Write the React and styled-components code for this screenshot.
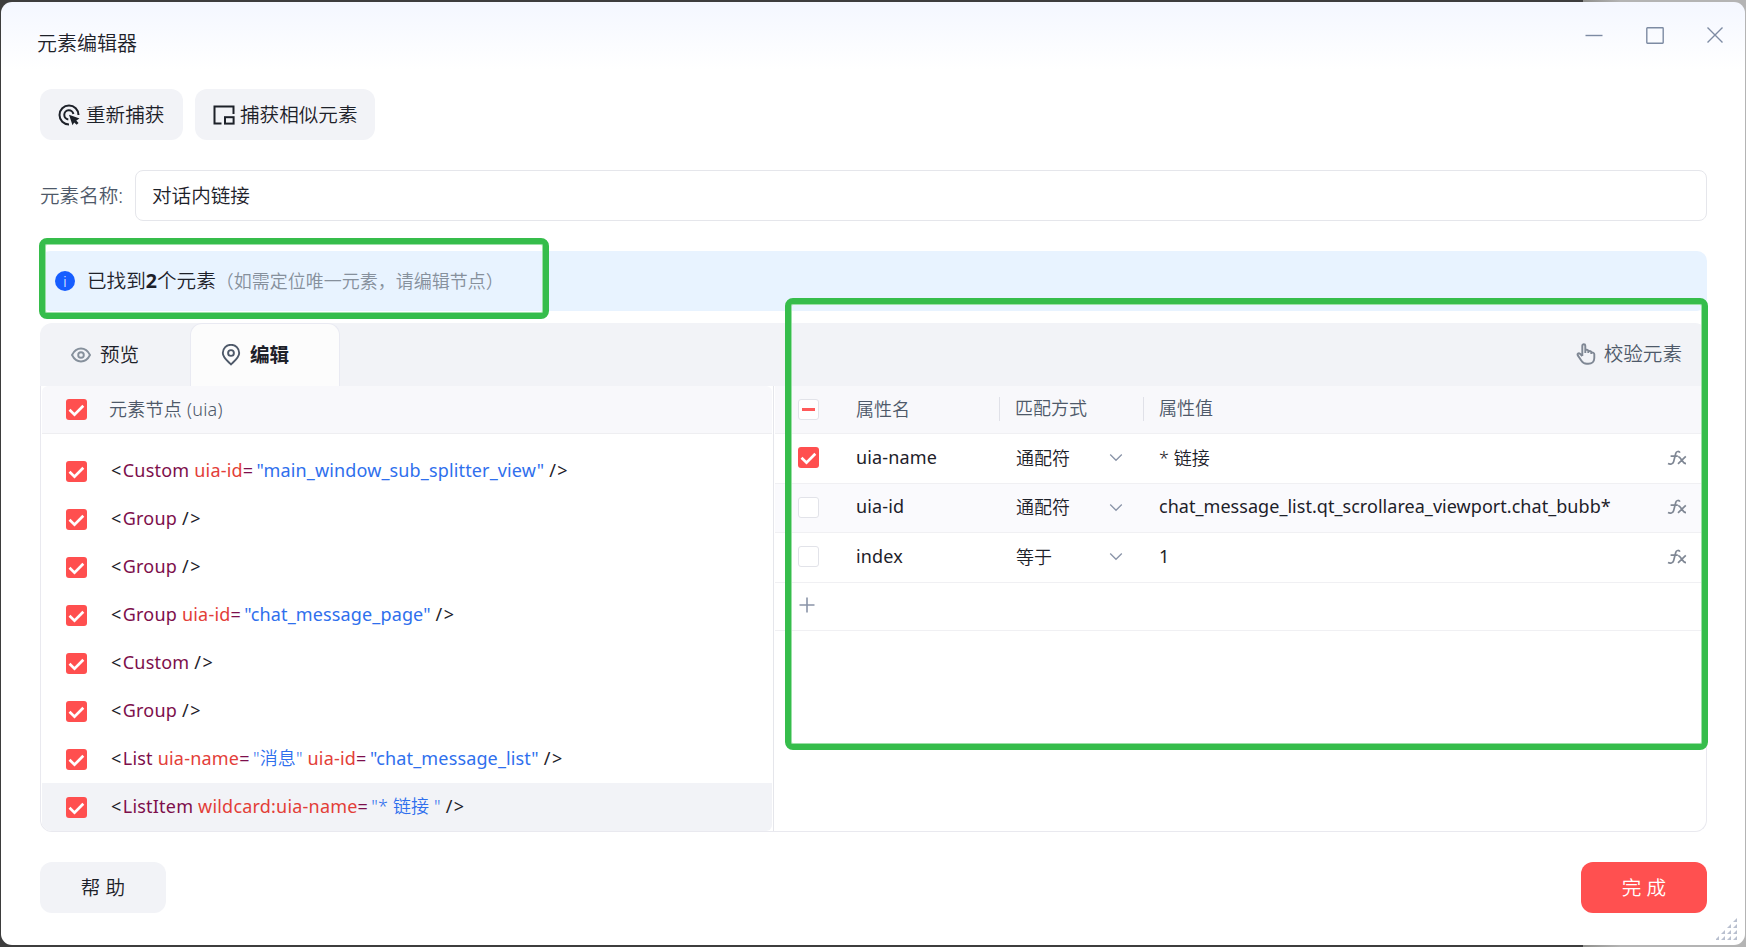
import React from 'react';
import styled, { createGlobalStyle } from 'styled-components';

const GlobalStyle = createGlobalStyle`
  * {
    box-sizing: border-box;
  }

  body {
    margin: 0;
    background: #3d3d3d;
    font-family: 'Noto Sans', 'Noto Sans CJK SC', sans-serif;
    overflow: hidden;
  }
`;

const nodes = [
  { tag: 'Custom', attrs: [['uia-id', 'main_window_sub_splitter_view']] },
  { tag: 'Group', attrs: [] },
  { tag: 'Group', attrs: [] },
  { tag: 'Group', attrs: [['uia-id', 'chat_message_page']] },
  { tag: 'Custom', attrs: [] },
  { tag: 'Group', attrs: [] },
  { tag: 'List', attrs: [['uia-name', '消息'], ['uia-id', 'chat_message_list']] },
  { tag: 'ListItem', attrs: [['wildcard:uia-name', '* 链接 ']], active: true },
];

const props = [
  { name: 'uia-name', match: '通配符', value: '* 链接', checked: true },
  { name: 'uia-id', match: '通配符', value: 'chat_message_list.qt_scrollarea_viewport.chat_bubb*' },
  { name: 'index', match: '等于', value: '1' },
];

// Chinese glyphs look too heavy beside the latin ones at regular weight
const hasChinese = (text) => /[\u4e00-\u9fff]/.test(text);

const Checkbox = ({ checked, partial }) => (
  <Box $checked={checked}>
    {checked && (
      <svg width='21' height='21' viewBox='0 0 21 21' fill='none'>
        <path d='M3.500 10.800l5 4.900L17.300 6.800' stroke='#fff' strokeWidth='2.7' />
      </svg>
    )}
    {partial && <Dash />}
  </Box>
);

const FxIcon = () => (
  <svg width='20' height='16' viewBox='0 0 20 16' fill='none' stroke='#7f8794' strokeWidth='1.7'>
    <path d='M13 2.600C12 1 9.400 1 8.800 3.200L6.600 11.800C6 14.200 3.200 14.600 1 13.600' />
    <path d='M3.600 6.200h7.200M11.200 6.600c3 0 3.800 7 7.800 7M18.800 6.400L11 13.800' />
  </svg>
);

const App = () => {
  return (
    <Desktop>
      <GlobalStyle />
      <Window>
        <TitleBar>
          <Title>元素编辑器</Title>
          <Controls>
            <svg width='18' height='18' viewBox='0 0 18 18'>
              <path d='M.5 9.500h17' />
            </svg>
            <svg width='18' height='18' viewBox='0 0 18 18'>
              <rect x='.8' y='1.800' width='16.400' height='15.400' rx='.6' />
            </svg>
            <svg width='18' height='18' viewBox='0 0 18 18'>
              <path d='M1.500 1.500l15 15M16.500 1.500l-15 15' />
            </svg>
          </Controls>
        </TitleBar>

        <Content>
          <Toolbar>
            <ToolButton $width={143} $gap={6}>
              <svg width='22' height='22' viewBox='0 0 22 22' fill='none' stroke='#1d2129' strokeWidth='2'>
                <path d='M11 20.500A9.500 9.500 0 1 1 20.500 11' />
                <path d='M10.300 15.400A4.600 4.600 0 1 1 15.400 10' />
                <path d='M11 10.800l10.500 3.800-3.200 2 2.200 2.300-1.800 1.800-2.500-2.200-1.700 2.800z' fill='#1d2129' stroke='none' />
              </svg>
              重新捕获
            </ToolButton>
            <ToolButton $width={180} $gap={5}>
              <svg width='22' height='22' viewBox='0 0 22 22' fill='none' stroke='#1d2129' strokeWidth='2'>
                <path d='M8.500 19.500h-7v-17h19V10' />
                <rect x='12' y='13.200' width='8.600' height='6.400' />
              </svg>
              捕获相似元素
            </ToolButton>
          </Toolbar>

          <Field>
            <label htmlFor='name'>元素名称:</label>
            <NameInput id='name' defaultValue='对话内链接' />
          </Field>

          <Notice>
            <InfoBadge>i</InfoBadge>
            <Found>
              已找到<b>2</b>个元素
            </Found>
            <Hint>（如需定位唯一元素，请编辑节点）</Hint>
            <Marker $top={-13} $left={-1} $width={510} $height={81} />
          </Notice>

          <Editor>
            <Tabs>
              <Tab $width={150}>
                <svg width='20' height='20' viewBox='0 0 20 20' fill='none' stroke='#86909c' strokeWidth='1.9'>
                  <path d='M1 10c4.400-8.600 13.600-8.600 18 0-4.400 8.600-13.600 8.600-18 0z' />
                  <circle cx='10' cy='10' r='2.8' />
                </svg>
                <TabText>预览</TabText>
              </Tab>
              <Tab $width={150} $active>
                <svg width='20' height='22' viewBox='0 0 20 22' fill='none' stroke='#4e5969' strokeWidth='1.9'>
                  <path d='M10 20.400C6.600 17 1.800 13.600 1.800 9a8.200 8.200 0 0 1 16.400 0c0 4.600-4.800 8-8.200 11.400z' />
                  <circle cx='10' cy='9' r='2.9' />
                </svg>
                <TabText>编辑</TabText>
              </Tab>
              <Verify>
                <svg width='20' height='22' viewBox='0 0 20 22' fill='none' stroke='#7f8794' strokeWidth='1.9' strokeLinejoin='round'>
                  <path d='M6.300 13V2.800a1.500 1.500 0 0 1 3 0V9M9.300 10V7.300c1.500-1 3-.4 3 .8V10M12.300 8.400c1.500-.8 3-.2 3 1V11M15.300 9.800c1.500-.6 3 0 3 1.400v3.800c0 3.600-2.500 5.800-6 5.800h-1.600c-2.500 0-4-1-5.300-3l-3.600-5.400c-.8-1.500.8-2.700 2.200-1.600l2.300 2.200' />
                </svg>
                <TabText>校验元素</TabText>
              </Verify>
            </Tabs>

            <Panes>
              <NodePane>
                <NodeHead>
                  <Checkbox checked />
                  <span>元素节点 (uia)</span>
                </NodeHead>
                <NodeList>
                  {nodes.map((node, i) => (
                    <NodeRow key={i} $active={node.active}>
                      <Checkbox checked />
                      <Code>
                        <Punct>&lt;</Punct>
                        <Tag>{node.tag}</Tag>
                        {node.attrs.map(([key, value]) => (
                          <React.Fragment key={key}>
                            {' '}
                            <Attr>{key}</Attr>
                            <Equals>=</Equals>
                            <Value $thin={hasChinese(value)}>"{value}"</Value>
                          </React.Fragment>
                        ))}
                        {' '}
                        <Punct>/&gt;</Punct>
                      </Code>
                    </NodeRow>
                  ))}
                </NodeList>
              </NodePane>

              <PropPane>
                <PropHead>
                  <Checkbox partial />
                  <span>属性名</span>
                  <HeadCell>匹配方式</HeadCell>
                  <HeadCell>属性值</HeadCell>
                </PropHead>
                {props.map((prop, i) => (
                  <PropRow key={prop.name} $striped={i % 2 === 1}>
                    <Checkbox checked={prop.checked} />
                    <PropName>{prop.name}</PropName>
                    <Match>
                      <span>{prop.match}</span>
                      <svg width='14' height='9' viewBox='0 0 14 9' fill='none' stroke='#8a94a8' strokeWidth='1.3'>
                        <path d='M1.200 1.500l5.800 5.800 5.800-5.800' />
                      </svg>
                    </Match>
                    <PropValue $thin={hasChinese(prop.value)}>{prop.value}</PropValue>
                    <FxIcon />
                  </PropRow>
                ))}
                <AddRow>
                  <svg width='16' height='16' viewBox='0 0 16 16' stroke='#8a94a8' strokeWidth='1.6'>
                    <path d='M8 .5v15M.5 8h15' />
                  </svg>
                </AddRow>
              </PropPane>
            </Panes>
            <Marker $top={-25} $left={745} $width={923} $height={452} />
          </Editor>

          <Footer>
            <FooterButton>帮 助</FooterButton>
            <FooterButton $primary>完 成</FooterButton>
          </Footer>
        </Content>

        <Grip width='22' height='23' viewBox='0 0 22 23'>
          {[0, 1, 2, 3].map((row) =>
            Array.from({ length: row + 1 }, (_, n) => (
              <path key={`${row}-${n}`} d={`M${21 - n * 6} ${row * 6}v4h-4z`} />
            ))
          )}
        </Grip>
      </Window>
    </Desktop>
  );
};

const Desktop = styled.div`
  width: 1746px;
  height: 947px;
  padding: 2px 1px;
  background: linear-gradient(to right, #3d3d3d 1583px, #8f8f8c 1583px, #b4b4b4 1620px, #b4b4b4);
`;

const Window = styled.div`
  position: relative;
  width: 1744px;
  height: 943px;
  border-radius: 11px;
  background: linear-gradient(#f4f7ff, #ffffff 68px);
  color: #1d2129;
  font-size: 19.6px;
`;

const TitleBar = styled.header`
  display: flex;
  justify-content: space-between;
  height: 87px;
  padding: 0 21px 0 36px;
`;

const Title = styled.h1`
  margin: 27px 0 0;
  font-size: 20px;
  font-weight: 350;
  line-height: 30px;
`;

const Controls = styled.div`
  display: flex;
  gap: 42.5px;
  padding-top: 24px;

  svg {
    fill: none;
    stroke: #7d8ba3;
    stroke-width: 1.4;
  }
`;

const Content = styled.main`
  padding: 0 38px 0 39px;
`;

const Toolbar = styled.div`
  display: flex;
  gap: 12px;
`;

const ToolButton = styled.button`
  display: flex;
  align-items: center;
  gap: ${(p) => p.$gap}px;
  width: ${(p) => p.$width}px;
  height: 51px;
  padding: 0 0 3px 18px;
  border: 0;
  border-radius: 12px;
  background: #f2f3f7;
  color: #1d2129;
  font: inherit;
  font-weight: 350;
  white-space: nowrap;

  svg {
    margin-top: 3px;
  }
`;

const Field = styled.div`
  display: flex;
  align-items: center;
  margin-top: 30px;

  label {
    width: 95px;
    padding-bottom: 2px;
    color: #4e5969;
    font-weight: 350;
  }
`;

const NameInput = styled.input`
  flex: 1;
  height: 51px;
  padding: 0 16px 2px;
  border: 1px solid #e5e6eb;
  border-radius: 8px;
  background: #ffffff;
  color: #1d2129;
  font: inherit;
  font-weight: 350;
  outline: none;
`;

const Notice = styled.div`
  position: relative;
  display: flex;
  align-items: center;
  height: 60px;
  margin-top: 30px;
  padding-left: 15px;
  border-radius: 10px;
  background: #e8f3ff;
  font-weight: 350;
`;

const InfoBadge = styled.span`
  display: flex;
  align-items: center;
  justify-content: center;
  width: 20px;
  height: 20px;
  margin-right: 12px;
  border-radius: 50%;
  background: #165dff;
  color: #ffffff;
  font-size: 14px;
`;

const Found = styled.span`
  padding-bottom: 3px;
  font-size: 19.6px;

  b {
    font-weight: 700;
  }
`;

const Hint = styled.span`
  padding-bottom: 2px;
  color: #86909c;
  font-size: 18px;
`;

const Marker = styled.div`
  position: absolute;
  z-index: 2;
  top: ${(p) => p.$top}px;
  left: ${(p) => p.$left}px;
  width: ${(p) => p.$width}px;
  height: ${(p) => p.$height}px;
  border: 6px solid #36bd4b;
  border-radius: 8px;
  box-shadow: inset 0 0 0 1px #9bdfa6;
  pointer-events: none;
`;

const Editor = styled.section`
  position: relative;
  height: 509px;
  margin-top: 12px;
`;

const Tabs = styled.div`
  display: flex;
  height: 63px;
  border-radius: 12px 12px 0 0;
  background: #f2f3f7;
`;

const Tab = styled.div`
  display: flex;
  align-items: center;
  gap: 9px;
  width: ${(p) => p.$width}px;
  padding-left: 30px;
  border: 1px solid ${(p) => (p.$active ? '#e9eaf2' : 'transparent')};
  border-bottom: 0;
  border-radius: 12px 12px 0 0;
  background: ${(p) => (p.$active ? '#fcfcfc' : 'transparent')};
  font-weight: ${(p) => (p.$active ? 700 : 350)};
`;

const TabText = styled.span`
  padding-bottom: 3px;
`;

const Verify = styled.div`
  display: flex;
  align-items: center;
  gap: 8px;
  margin-left: auto;
  padding: 0 25px 1px 0;
  color: #4e5969;
  font-weight: 350;
`;

const Panes = styled.div`
  display: flex;
  height: 446px;
  border: 1px solid #e9e9ef;
  border-top: 0;
  border-radius: 0 0 12px 12px;
  overflow: hidden;
  font-size: 18px;
`;

const NodePane = styled.div`
  width: 733px;
  padding: 0 1px;
  border-right: 1px solid #e5e6eb;
`;

const NodeHead = styled.div`
  display: flex;
  align-items: center;
  gap: 22px;
  height: 48px;
  padding: 0 0 1px 24px;
  border-bottom: 1px solid #eeeef1;
  border-radius: 6px 6px 0 0;
  background: #f8f8fb;
  color: #4e5969;
  font-weight: 350;

  span:last-child {
    padding-bottom: 3px;
    letter-spacing: 0.25px;
  }
`;

const NodeList = styled.div`
  padding-top: 13px;
`;

const NodeRow = styled.div`
  display: flex;
  align-items: center;
  gap: 24px;
  height: 48px;
  padding: 1px 0 0 24px;
  border-radius: 0 0 6px 0;
  background: ${(p) => (p.$active ? '#f2f3f7' : 'transparent')};
`;

const Code = styled.code`
  margin-top: -4px;
  font-family: inherit;
  letter-spacing: 0.2px;
  line-height: 26px;
  white-space: pre;
`;

const Punct = styled.span`
  letter-spacing: 1.5px;
`;

const Tag = styled.span`
  color: #7d0f4b;
`;

const Equals = styled(Tag)`
  letter-spacing: 3.5px;
`;

const Attr = styled.span`
  color: #e33e38;
`;

const Value = styled.span`
  color: #2f6fed;
  font-weight: ${(p) => (p.$thin ? 350 : 400)};
  letter-spacing: 0.14px;
`;

const PropPane = styled.div`
  flex: 1;
  padding-left: 1px;
`;

const PropGrid = styled.div`
  display: grid;
  grid-template-columns: 58px 143px 144px 1fr 20px;
  align-items: center;
  padding: 0 19px 1px 23px;
  border-bottom: 1px solid #f0f0f3;
`;

const PropHead = styled(PropGrid)`
  height: 48px;
  background: #f8f8fb;
  color: #4e5969;
  font-weight: 350;

  > span:nth-child(2) {
    padding-bottom: 3px;
  }
`;

const HeadCell = styled.div`
  height: 24px;
  padding-left: 15px;
  border-left: 1px solid #e0e1e8;
  line-height: 22px;
`;

const PropRow = styled(PropGrid)`
  height: 49.5px;
  background: ${(p) => (p.$striped ? '#fafafd' : '#ffffff')};
`;

const PropName = styled.div`
  padding-bottom: 2px;
  letter-spacing: 0.15px;
`;

const Match = styled.div`
  display: flex;
  align-items: center;
  justify-content: space-between;
  padding: 0 20px 0 17px;
  font-weight: 350;

  span {
    padding-bottom: 2px;
  }
`;

const PropValue = styled.div`
  padding: 0 0 2px 16px;
  font-weight: ${(p) => (p.$thin ? 350 : 400)};
  letter-spacing: 0.04px;
`;

const AddRow = styled.div`
  display: flex;
  align-items: center;
  height: 48.5px;
  padding: 0 0 2px 24px;
  border-bottom: 1px solid #f0f0f3;
`;

const Box = styled.span`
  display: block;
  width: 21px;
  height: 21px;
  border: ${(p) => (p.$checked ? '0' : '1px solid #e2e3e9')};
  border-radius: 3px;
  background: ${(p) => (p.$checked ? '#ff4f4f' : '#ffffff')};

  svg {
    display: block;
  }
`;

const Dash = styled.span`
  display: block;
  width: 13px;
  height: 3px;
  margin: 8px 0 0 3px;
  background: #ff5a5a;
`;

const Footer = styled.footer`
  display: flex;
  justify-content: space-between;
  margin-top: 30px;
`;

const FooterButton = styled.button`
  width: 126px;
  height: 51px;
  padding: 0 0 3px;
  border: 0;
  border-radius: 12px;
  background: ${(p) => (p.$primary ? '#ff5050' : '#f2f3f7')};
  color: ${(p) => (p.$primary ? '#ffffff' : '#1d2129')};
  font: inherit;
  font-weight: 350;
`;

const Grip = styled.svg`
  position: absolute;
  right: 7px;
  bottom: 4px;
  fill: #b9c0cf;
`;

export default App;
